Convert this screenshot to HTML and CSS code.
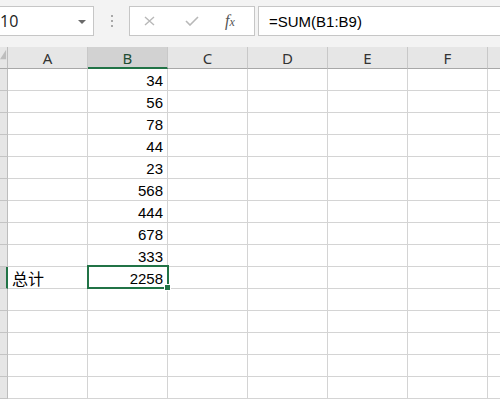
FILE: index.html
```html
<!DOCTYPE html>
<html>
<head>
<meta charset="utf-8">
<link rel="stylesheet" href="styles.css">
</head>
<body>
<div class="app">
  <div class="toolbar">
    <div class="namebox">
      <span class="name">10</span>
      <svg class="caret" width="8" height="4" viewBox="0 0 8 4"><path d="M0 0H8L4 4Z" fill="#6a6a6a"/></svg>
    </div>
    <div class="sep">
      <span class="dot"></span><span class="dot"></span><span class="dot"></span>
    </div>
    <div class="fxbox">
      <svg class="ico" width="11" height="10" viewBox="0 0 11 10"><path d="M1 1L10 9M10 1L1 9" stroke="#b8b8b8" stroke-width="1.4" fill="none"/></svg>
      <svg class="ico" width="14" height="10" viewBox="0 0 14 10"><path d="M1 5L5 9L13 1" stroke="#b8b8b8" stroke-width="1.6" fill="none"/></svg>
      <span class="fx">f<span class="fxx">x</span></span>
    </div>
    <div class="formula">=SUM(B1:B9)</div>
  </div>
  <div class="sheet">
    <div class="corner"><svg width="8" height="14" viewBox="0 0 8 14"><path d="M7 2V13H0Z" fill="#bdbdbd"/></svg></div>
    <div class="ch">A</div>
    <div class="ch sel">B</div>
    <div class="ch">C</div>
    <div class="ch">D</div>
    <div class="ch">E</div>
    <div class="ch">F</div>
    <div class="ch last"></div>

    <div class="rh"></div><div class="c"></div><div class="c num">34</div><div class="c"></div><div class="c"></div><div class="c"></div><div class="c"></div><div class="c last"></div>
    <div class="rh"></div><div class="c"></div><div class="c num">56</div><div class="c"></div><div class="c"></div><div class="c"></div><div class="c"></div><div class="c last"></div>
    <div class="rh"></div><div class="c"></div><div class="c num">78</div><div class="c"></div><div class="c"></div><div class="c"></div><div class="c"></div><div class="c last"></div>
    <div class="rh"></div><div class="c"></div><div class="c num">44</div><div class="c"></div><div class="c"></div><div class="c"></div><div class="c"></div><div class="c last"></div>
    <div class="rh"></div><div class="c"></div><div class="c num">23</div><div class="c"></div><div class="c"></div><div class="c"></div><div class="c"></div><div class="c last"></div>
    <div class="rh"></div><div class="c"></div><div class="c num">568</div><div class="c"></div><div class="c"></div><div class="c"></div><div class="c"></div><div class="c last"></div>
    <div class="rh"></div><div class="c"></div><div class="c num">444</div><div class="c"></div><div class="c"></div><div class="c"></div><div class="c"></div><div class="c last"></div>
    <div class="rh"></div><div class="c"></div><div class="c num">678</div><div class="c"></div><div class="c"></div><div class="c"></div><div class="c"></div><div class="c last"></div>
    <div class="rh"></div><div class="c"></div><div class="c num">333</div><div class="c"></div><div class="c"></div><div class="c"></div><div class="c"></div><div class="c last"></div>
    <div class="rh rsel"></div><div class="c cjk">总计</div><div class="c num active">2258<span class="frame"></span><span class="handle"></span></div><div class="c"></div><div class="c"></div><div class="c"></div><div class="c"></div><div class="c last"></div>
    <div class="rh"></div><div class="c"></div><div class="c"></div><div class="c"></div><div class="c"></div><div class="c"></div><div class="c"></div><div class="c last"></div>
    <div class="rh"></div><div class="c"></div><div class="c"></div><div class="c"></div><div class="c"></div><div class="c"></div><div class="c"></div><div class="c last"></div>
    <div class="rh"></div><div class="c"></div><div class="c"></div><div class="c"></div><div class="c"></div><div class="c"></div><div class="c"></div><div class="c last"></div>
    <div class="rh"></div><div class="c"></div><div class="c"></div><div class="c"></div><div class="c"></div><div class="c"></div><div class="c"></div><div class="c last"></div>
    <div class="rh"></div><div class="c"></div><div class="c"></div><div class="c"></div><div class="c"></div><div class="c"></div><div class="c"></div><div class="c last"></div>
  </div>
</div>
</body>
</html>
```
FILE: styles.css
```css
html, body {
  margin: 0;
  padding: 0;
  background: #ffffff;
}
.app {
  width: 500px;
  height: 400px;
  overflow: hidden;
  font-family: "Liberation Sans", Arial, sans-serif;
}
.toolbar {
  height: 47px;
  box-sizing: border-box;
  background: #f3f3f3;
  display: flex;
  align-items: flex-start;
  padding-top: 6px;
}
.namebox {
  width: 95px;
  height: 30px;
  margin-left: -1px;
  box-sizing: border-box;
  background: #fff;
  border: 1px solid #c6c6c6;
  display: flex;
  align-items: center;
  justify-content: space-between;
  padding: 0 7px 0 0;
  font-size: 16px;
  color: #222;
  font-family: "Open Sans", "Liberation Sans", sans-serif;
}
.name {
  margin-left: 0;
}
.caret {
  margin-top: 1px;
}
.sep {
  width: 35px;
  height: 30px;
  display: flex;
  flex-direction: column;
  align-items: center;
  justify-content: center;
  gap: 3px;
}
.dot {
  width: 2px;
  height: 2px;
  background: #a8a8a8;
}
.fxbox {
  width: 126px;
  height: 30px;
  box-sizing: border-box;
  background: #fff;
  border: 1px solid #c6c6c6;
  display: flex;
  align-items: center;
  padding-left: 14px;
  gap: 30px;
}
.fx {
  font-family: "Liberation Serif", serif;
  font-style: italic;
  font-size: 16px;
  color: #555;
  margin-left: -4px;
}
.fxx {
  font-size: 12px;
}
.formula {
  flex: 1;
  height: 30px;
  margin-left: 3px;
  margin-right: -2px;
  box-sizing: border-box;
  background: #fff;
  border: 1px solid #c6c6c6;
  display: flex;
  align-items: center;
  padding-left: 10px;
  font-size: 15px;
  color: #000;
}
.sheet {
  display: grid;
  grid-template-columns: 8px repeat(6, 80px) 20px;
  grid-auto-rows: 22px;
}
.corner {
  background: #e6e6e6;
  border-right: 1px solid #bdbdbd;
  border-bottom: 1px solid #a8a8a8;
  box-sizing: border-box;
  overflow: hidden;
  display: flex;
  align-items: flex-start;
}
.ch {
  background: #e6e6e6;
  box-sizing: border-box;
  border-right: 1px solid #c8c8c8;
  border-bottom: 1px solid #a8a8a8;
  display: flex;
  align-items: center;
  justify-content: center;
  font-family: "Noto Sans", "Liberation Sans", sans-serif;
  font-size: 15px;
  color: #333;
  padding-top: 1px;
}
.ch.sel {
  background: #d2d2d2;
  border-bottom: 2px solid #217346;
  color: #1e4d33;
}
.rh {
  background: #e6e6e6;
  box-sizing: border-box;
  border-right: 1px solid #bdbdbd;
  border-bottom: 1px solid #c4c4c4;
}
.rh.rsel {
  background: #d2d2d2;
  border-right: 2px solid #217346;
}
.c {
  box-sizing: border-box;
  border-right: 1px solid #d4d4d4;
  border-bottom: 1px solid #d4d4d4;
  font-size: 15px;
  color: #000;
  display: flex;
  align-items: center;
  padding: 1px 4px 0 4px;
}
.num {
  justify-content: flex-end;
}
.cjk {
  font-family: "Noto Sans CJK SC", sans-serif;
  font-size: 16px;
  padding-left: 4px;
}
.active {
  position: relative;
}
.frame {
  position: absolute;
  left: -1px;
  top: -2px;
  right: -2px;
  bottom: -1px;
  border: 2px solid #217346;
  pointer-events: none;
}
.handle {
  position: absolute;
  right: -4px;
  bottom: -3px;
  width: 5px;
  height: 5px;
  background: #217346;
  border: 1px solid #fff;
}
```
